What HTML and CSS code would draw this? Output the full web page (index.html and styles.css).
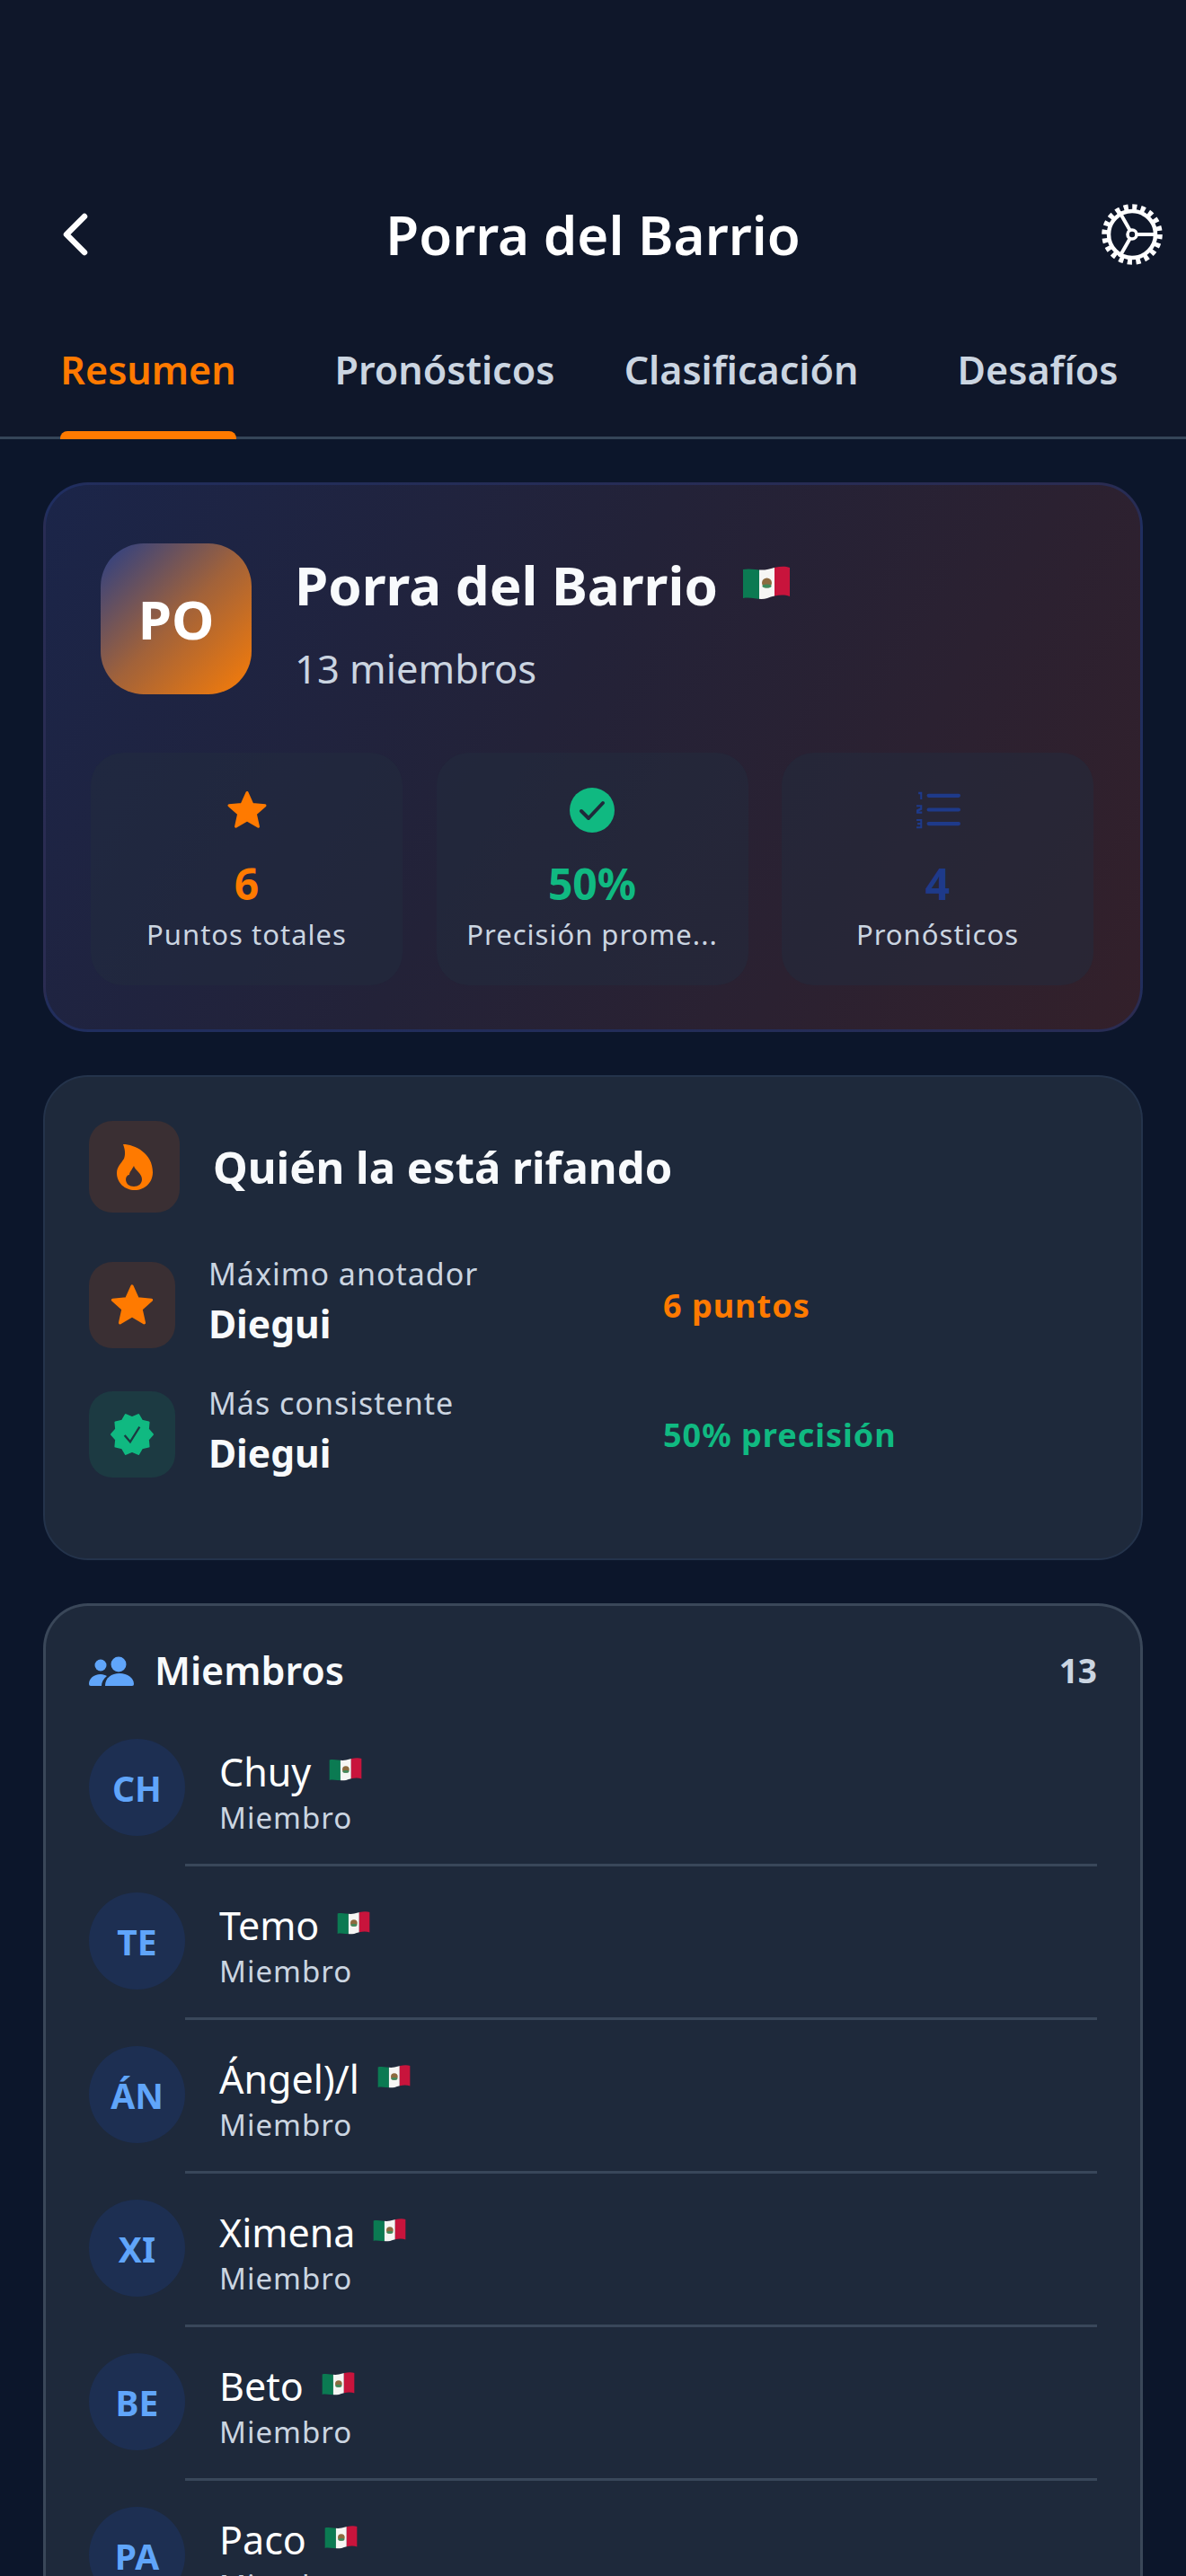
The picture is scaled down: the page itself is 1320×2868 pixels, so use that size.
FILE: index.html
```html
<!DOCTYPE html>
<html lang="es">
<head>
    <meta charset="utf-8">
    <title>Porra del Barrio</title>
    <meta name="viewport" content="width=device-width, initial-scale=1">
    <link rel="stylesheet" href="styles.css">
</head>
<body>

<svg class="defs" width="0" height="0">
    <defs>
        <clipPath id="flag-clip">
            <path d="M0 5 C10 3 18 7 27 5 C35 3 44 0 52 3 V35 C44 32 35 34 27 37 C18 40 10 35 0 37Z"/>
        </clipPath>
        <symbol id="flag" viewBox="0 0 52 40">
            <g clip-path="url(#flag-clip)">
                <rect x="0" y="0" width="18" height="40" fill="#0b7a52"/>
                <rect x="18" y="0" width="17" height="40" fill="#f6f6f4"/>
                <rect x="35" y="0" width="17" height="40" fill="#c8143c"/>
                <ellipse cx="26.5" cy="20" rx="5.5" ry="5.5" fill="#8d6b3f"/>
                <ellipse cx="26.5" cy="23.5" rx="5" ry="2" fill="#3f8a5c"/>
            </g>
        </symbol>
        <symbol id="star" viewBox="0 0 24 24">
            <path d="M12 2.6 L14.8 8.8 L21.6 9.5 L16.5 14 L18 20.8 L12 17.3 L6 20.8 L7.5 14 L2.4 9.5 L9.2 8.8Z" fill="#ff7a00" stroke="#ff7a00" stroke-width="1.4" stroke-linejoin="round"/>
        </symbol>
    </defs>
</svg>

<div class="page">
    <header class="topbar">
        <svg class="back" viewBox="0 0 32 48"><path d="M26 4 L6 24 L26 44" fill="none" stroke="#fff" stroke-width="6.5" stroke-linecap="round" stroke-linejoin="round"/></svg>
        <h1 class="topbar-title">Porra del Barrio</h1>
        <svg class="gear" viewBox="0 0 68 68">
            <circle cx="34" cy="34" r="30" fill="none" stroke="#fff" stroke-width="7.5" stroke-dasharray="5 4.425"/>
            <circle cx="34" cy="34" r="26" fill="none" stroke="#fff" stroke-width="4.5"/>
            <path d="M38 34 H60 M32 30 L20 9 M32 38 L20 59" fill="none" stroke="#fff" stroke-width="4"/>
            <circle cx="34" cy="34" r="5" fill="none" stroke="#fff" stroke-width="3.6"/>
        </svg>
    </header>

    <nav class="tabs">
        <div class="tab active"><div class="tab-in">Resumen<div class="tab-mark"></div></div></div>
        <div class="tab"><div class="tab-in">Pronósticos</div></div>
        <div class="tab"><div class="tab-in">Clasificación</div></div>
        <div class="tab"><div class="tab-in">Desafíos</div></div>
    </nav>

    <section class="card hero">
        <div class="hero-head">
            <div class="hero-logo">PO</div>
            <div class="hero-info">
                <div class="hero-name">Porra del Barrio <svg class="flag-lg"><use href="#flag"/></svg></div>
                <div class="hero-sub">13 miembros</div>
            </div>
        </div>
        <div class="stats">
            <div class="stat">
                <svg class="stat-icon"><use href="#star"/></svg>
                <div class="stat-num orange">6</div>
                <div class="stat-label">Puntos totales</div>
            </div>
            <div class="stat">
                <svg class="stat-icon" viewBox="0 0 50 50">
                    <circle cx="25" cy="25" r="25" fill="#10b981"/>
                    <path d="M13 26 L21 34 L37 17" fill="none" stroke="#1f2a3a" stroke-width="4" stroke-linecap="round" stroke-linejoin="round"/>
                </svg>
                <div class="stat-num green">50%</div>
                <div class="stat-label">Precisión prome...</div>
            </div>
            <div class="stat">
                <svg class="stat-icon" viewBox="0 0 48 41">
                    <path d="M14 5 H46 M14 20 H46 M14 35 H46" fill="none" stroke="#1e3a8a" stroke-width="4" stroke-linecap="round"/>
                    <path d="M3 1 H7 V9 H5 V3.5 H3Z M1 15 H7 V20 L3 22 H7 V24 H1 V20 L5 18 V17 H1Z M1 30 H7 V40 H1 V38 H5 V36 H2 V34 H5 V32 H1Z" fill="#1e3a8a"/>
                </svg>
                <div class="stat-num navy">4</div>
                <div class="stat-label">Pronósticos</div>
            </div>
        </div>
    </section>

    <section class="card top">
        <div class="top-head">
            <div class="top-box box-fire">
                <svg class="fire" viewBox="0 0 40 51">
                    <path d="M7 0 C20 0 40 10 40 31 C40 43 31 51 20 51 C9 51 0 43 0 32 C0 25 5 21 8 16 C10 11 9 5 7 0Z" fill="#ff7a00"/>
                    <path d="M19 24 C20 29 28 32 28 39 C28 44 24 47 19 47 C14 47 10 44 10 39 C10 36 12 34 14 34 C14 31 17 28 19 24Z" fill="#3b2f33"/>
                </svg>
            </div>
            <h2 class="top-title">Quién la está rifando</h2>
        </div>
        <div class="top-row">
            <div class="top-box box-orange"><svg class="top-star"><use href="#star"/></svg></div>
            <div class="top-text">
                <div class="top-label">Máximo anotador</div>
                <div class="top-name">Diegui</div>
            </div>
            <div class="top-value orange">6 puntos</div>
        </div>
        <div class="top-row">
            <div class="top-box box-green">
                <svg class="top-icon" viewBox="0 0 24 24">
                    <path d="M23 12l-2.44-2.79.34-3.69-3.61-.82-1.89-3.2L12 2.96 8.6 1.5 6.71 4.69 3.1 5.5l.34 3.7L1 12l2.44 2.79-.34 3.7 3.61.82L8.6 22.5l3.4-1.47 3.4 1.46 1.89-3.19 3.61-.82-.34-3.69L23 12z" fill="#10b981" stroke="#10b981" stroke-linejoin="round"/>
                    <path d="M8 12.5 L11 16 L16 8" fill="none" stroke="#1c3a42" stroke-width="1.1"/>
                </svg>
            </div>
            <div class="top-text">
                <div class="top-label">Más consistente</div>
                <div class="top-name">Diegui</div>
            </div>
            <div class="top-value green">50% precisión</div>
        </div>
    </section>

    <section class="card members">
        <div class="members-head">
            <svg class="people" viewBox="0 0 50 33">
                <circle cx="33" cy="9" r="8.5" fill="#60a5fa"/>
                <circle cx="13" cy="10" r="6.5" fill="#60a5fa"/>
                <path d="M18 33 C18 24 25 19 34 19 C43 19 50 24 50 31 Q50 33 48 33Z" fill="#60a5fa"/>
                <path d="M0 31 C0 25 5 20 13 20 C16 20 18 21 20 22 C16 25 14 29 14 33 H2 Q0 33 0 31Z" fill="#60a5fa"/>
            </svg>
            <h2 class="members-title">Miembros</h2>
            <div class="members-count">13</div>
        </div>

        <div class="member">
            <div class="avatar">CH</div>
            <div class="member-text">
                <div class="member-name">Chuy <svg class="flag"><use href="#flag"/></svg></div>
                <div class="member-role">Miembro</div>
            </div>
        </div>
        <div class="rule"></div>
        <div class="member">
            <div class="avatar">TE</div>
            <div class="member-text">
                <div class="member-name">Temo <svg class="flag"><use href="#flag"/></svg></div>
                <div class="member-role">Miembro</div>
            </div>
        </div>
        <div class="rule"></div>
        <div class="member">
            <div class="avatar">ÁN</div>
            <div class="member-text">
                <div class="member-name">Ángel)/l <svg class="flag"><use href="#flag"/></svg></div>
                <div class="member-role">Miembro</div>
            </div>
        </div>
        <div class="rule"></div>
        <div class="member">
            <div class="avatar">XI</div>
            <div class="member-text">
                <div class="member-name">Ximena <svg class="flag"><use href="#flag"/></svg></div>
                <div class="member-role">Miembro</div>
            </div>
        </div>
        <div class="rule"></div>
        <div class="member">
            <div class="avatar">BE</div>
            <div class="member-text">
                <div class="member-name">Beto <svg class="flag"><use href="#flag"/></svg></div>
                <div class="member-role">Miembro</div>
            </div>
        </div>
        <div class="rule"></div>
        <div class="member">
            <div class="avatar">PA</div>
            <div class="member-text">
                <div class="member-name">Paco <svg class="flag"><use href="#flag"/></svg></div>
                <div class="member-role">Miembro</div>
            </div>
        </div>
    </section>
</div>

</body>
</html>
```

FILE: styles.css
```css
* {
    margin: 0;
    padding: 0;
    box-sizing: border-box;
}

html, body {
    height: 2868px;
    overflow: hidden;
}

body {
    font-family: "Noto Sans", "Open Sans", sans-serif;
    color: #f8fafc;
    background: #0c162b;
}

.defs {
    display: block;
}

.page {
    height: 2868px;
    overflow: hidden;
}

.orange { color: #ff7a00; }
.green { color: #10b981; }
.navy { color: #1e3a8a; }

/* top bar */
.topbar {
    display: grid;
    grid-template-columns: 1fr auto 1fr;
    align-items: center;
    height: 295px;
    padding: 227px 26px 0;
    background: #0f172a;
}

.back {
    width: 32px;
    height: 48px;
    margin-left: 42px;
}

.gear {
    width: 68px;
    height: 68px;
    justify-self: end;
}

.topbar-title {
    font-size: 60px;
    font-weight: 600;
    line-height: 68px;
    color: #fff;
}

/* tabs */
.tabs {
    display: flex;
    height: 194px;
    padding-top: 90px;
    background: #0f172a;
    border-bottom: 3px solid #354558;
}

.tab {
    flex: 1;
    display: flex;
    justify-content: center;
    font-size: 43px;
    font-weight: 600;
    color: #cbd5e1;
    line-height: 54px;
}

.tab-in {
    display: flex;
    flex-direction: column;
    height: 104px;
}

.tab.active {
    color: #ff7a00;
}

.tab-mark {
    height: 9px;
    margin-top: 41px;
    background: #ff7a00;
    border-radius: 8px 8px 0 0;
}

/* cards */
.card {
    width: 1224px;
    margin: 48px 0 0 48px;
    border-radius: 50px;
}

.hero {
    height: 612px;
    margin-top: 48px;
    padding: 65px 52px 0 50px;
    border: 3px solid rgba(37, 55, 115, 0.55);
    background: linear-gradient(120deg, #1b2549 0%, #232238 45%, #33202a 100%);
}

.hero-head {
    display: flex;
    gap: 48px;
    padding-left: 11px;
}

.hero-logo {
    width: 168px;
    height: 168px;
    display: flex;
    align-items: center;
    justify-content: center;
    font-size: 60px;
    font-weight: 700;
    color: #fff;
    border-radius: 48px;
    background: linear-gradient(135deg, #34427f 5%, #a1623a 50%, #f07a0c 95%);
}

.hero-name {
    display: flex;
    align-items: center;
    gap: 28px;
    margin-top: 5px;
    font-size: 60px;
    font-weight: 700;
    line-height: 82px;
    white-space: nowrap;
}

.flag-lg {
    width: 52px;
    height: 40px;
    margin-top: -4px;
}

.hero-sub {
    margin-top: 22px;
    font-size: 43.5px;
    line-height: 60px;
    color: #cbd5e1;
}

.stats {
    display: grid;
    grid-template-columns: repeat(3, 347px);
    justify-content: space-between;
    margin-top: 64px;
}

.stat {
    height: 259px;
    padding-top: 39px;
    display: flex;
    flex-direction: column;
    align-items: center;
    background: rgba(34, 44, 62, 0.5);
    border-radius: 36px;
}

.stat-icon {
    width: 50px;
    height: 50px;
}

.stat-num {
    margin-top: 24px;
    font-size: 48px;
    font-weight: 700;
    line-height: 66px;
}

.stat-label {
    margin-top: 1px;
    font-size: 31px;
    letter-spacing: 1px;
    line-height: 44px;
    color: #cbd5e1;
    white-space: nowrap;
}

/* who's on top */
.top {
    height: 540px;
    padding: 49px 49px 0;
    background: #1e293b;
    border: 2px solid #24334b;
}

.top-head {
    display: flex;
    align-items: center;
    gap: 37px;
    margin-bottom: 47px;
}

.top-head .top-box {
    width: 101px;
    height: 102px;
}

.top-title {
    font-size: 49px;
    font-weight: 700;
    line-height: 68px;
}

.top-box {
    width: 96px;
    height: 96px;
    display: flex;
    align-items: center;
    justify-content: center;
    border-radius: 26px;
}

.box-fire, .box-orange { background: #3a2f33; }
.box-green { background: #1c3a42; }

.fire {
    width: 40px;
    height: 51px;
}

.top-icon {
    width: 50px;
    height: 50px;
}

.top-star {
    width: 54px;
    height: 54px;
}

.top-row {
    display: grid;
    grid-template-columns: 96px 469px auto;
    column-gap: 37px;
    align-items: center;
    height: 112px;
    margin-bottom: 32px;
}

.top-label {
    font-size: 34px;
    letter-spacing: 1px;
    line-height: 42px;
    color: #cbd5e1;
}

.top-name {
    font-size: 42.5px;
    font-weight: 700;
    line-height: 70px;
}

.top-value {
    font-size: 36px;
    font-weight: 700;
    letter-spacing: 1px;
}

/* members */
.members {
    height: 1200px;
    padding: 33px 48px 0 48px;
    background: #1e293b;
    border: 3px solid #3a4759;
    border-bottom: none;
}

.members-head {
    display: flex;
    align-items: center;
    height: 78px;
    margin-bottom: 37px;
}

.people {
    width: 50px;
    height: 33px;
}

.members-title {
    margin-left: 23px;
    font-size: 43px;
    font-weight: 600;
    line-height: 58px;
}

.members-count {
    margin: -2px 0 0 auto;
    font-size: 37px;
    font-weight: 700;
    color: #cbd5e1;
}

.member {
    display: flex;
    gap: 38px;
    height: 108px;
}

.avatar {
    width: 107px;
    height: 108px;
    flex-shrink: 0;
    display: flex;
    align-items: center;
    justify-content: center;
    font-size: 39px;
    font-weight: 700;
    color: #60a5fa;
    background: #1d2f52;
    border-radius: 50%;
}

.member-text {
    padding-top: 6px;
}

.member-name {
    display: flex;
    align-items: center;
    gap: 20px;
    font-size: 43px;
    line-height: 62px;
    color: #fff;
}

.flag {
    width: 37px;
    height: 28px;
    margin-top: -6px;
}

.member-role {
    font-size: 33px;
    letter-spacing: 1px;
    line-height: 40px;
    color: #cbd5e1;
}

.rule {
    height: 3px;
    margin: 31px 0 29px 107px;
    background: #39475a;
}
```
